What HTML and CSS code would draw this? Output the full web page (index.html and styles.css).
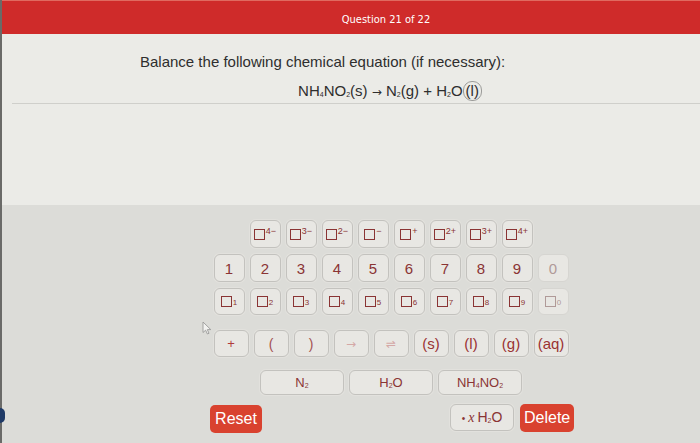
FILE: index.html
```html
<!DOCTYPE html>
<html>
<head>
<meta charset="utf-8">
<link rel="stylesheet" href="styles.css">
</head>
<body>
<div class="screen">
  <header class="topbar"><span class="title">Question 21 of 22</span></header>
  <section class="prompt">
    <p class="instr">Balance the following chemical equation (if necessary):</p>
    <div class="eqrow">
      <div class="eq">NH<sub>4</sub>NO<sub>2</sub>(s) <span class="arr">→</span> N<sub>2</sub>(g) + H<sub>2</sub>O<span class="focus">(l)</span></div>
    </div>
    <div class="rule"></div>
  </section>
  <section class="pad">
    <div class="keys">
      <div class="row r-charge">
        <button class="key"><span class="box"></span><sup>4−</sup></button>
        <button class="key"><span class="box"></span><sup>3−</sup></button>
        <button class="key"><span class="box"></span><sup>2−</sup></button>
        <button class="key"><span class="box"></span><sup>−</sup></button>
        <button class="key"><span class="box"></span><sup>+</sup></button>
        <button class="key"><span class="box"></span><sup>2+</sup></button>
        <button class="key"><span class="box"></span><sup>3+</sup></button>
        <button class="key"><span class="box"></span><sup>4+</sup></button>
      </div>
      <div class="row r-digit">
        <button class="key">1</button>
        <button class="key">2</button>
        <button class="key">3</button>
        <button class="key">4</button>
        <button class="key">5</button>
        <button class="key">6</button>
        <button class="key">7</button>
        <button class="key">8</button>
        <button class="key">9</button>
        <button class="key dim">0</button>
      </div>
      <div class="row r-sub">
        <button class="key"><span class="box"></span><sub>1</sub></button>
        <button class="key"><span class="box"></span><sub>2</sub></button>
        <button class="key"><span class="box"></span><sub>3</sub></button>
        <button class="key"><span class="box"></span><sub>4</sub></button>
        <button class="key"><span class="box"></span><sub>5</sub></button>
        <button class="key"><span class="box"></span><sub>6</sub></button>
        <button class="key"><span class="box"></span><sub>7</sub></button>
        <button class="key"><span class="box"></span><sub>8</sub></button>
        <button class="key"><span class="box"></span><sub>9</sub></button>
        <button class="key dim"><span class="box"></span><sub>0</sub></button>
      </div>
      <div class="row r-sym">
        <button class="key plus">+</button>
        <button class="key paren">(</button>
        <button class="key paren">)</button>
        <button class="key faint">→</button>
        <button class="key faint">⇌</button>
        <button class="key state">(s)</button>
        <button class="key state">(l)</button>
        <button class="key state">(g)</button>
        <button class="key state">(aq)</button>
      </div>
      <div class="row r-species">
        <button class="key species"><span class="formula">N<sub>2</sub></span></button>
        <button class="key species"><span class="formula">H<sub>2</sub>O</span></button>
        <button class="key species"><span class="formula">NH<sub>4</sub>NO<sub>2</sub></span></button>
      </div>
      <div class="row r-actions">
        <button class="btn-red">Reset</button>
        <div class="right-group">
          <button class="key hydrate"><span class="formula"><span class="dot">•</span><i>x</i>H<sub>2</sub>O</span></button>
          <button class="btn-red">Delete</button>
        </div>
      </div>
    </div>
  </section>
  <svg class="cursor" width="10" height="14" viewBox="0 0 10 14"><path d="M1 1 L1 11.5 L3.6 9.2 L5.4 13 L7 12.3 L5.3 8.6 L8.8 8.6 Z" fill="#f2f2f0" stroke="#9a9a98" stroke-width="0.9" stroke-linejoin="round"/></svg>
  <span class="blob"></span>
</div>
</body>
</html>
```

FILE: styles.css
```css
* { box-sizing: border-box; }
html, body { margin: 0; padding: 0; }
body {
  width: 700px;
  height: 443px;
  overflow: hidden;
  font-family: "Liberation Sans", Arial, sans-serif;
  background: #dcdcd8;
}
.screen {
  position: relative;
  width: 700px;
  height: 443px;
  border-left: 2px solid #6a6a68;
  display: flex;
  flex-direction: column;
}
.topbar {
  height: 34px;
  flex: none;
  background: #cf2b2a;
  border-top: 1px solid #e06a60;
  display: flex;
  justify-content: center;
  padding-left: 70px;
  padding-top: 12px;
}
.title {
  color: #fff;
  font-family: "Liberation Sans Narrow", "DejaVu Sans Condensed", "Liberation Sans", sans-serif;
  font-size: 11px;
  line-height: 14px;
}
.prompt {
  height: 171px;
  flex: none;
  background: #ebebe7;
  padding-top: 19px;
}
.instr {
  margin: 0 0 0 138px;
  font-size: 15px;
  line-height: 18px;
  color: #2e2e2e;
}
.eqrow {
  display: flex;
  justify-content: center;
  margin-left: 78px;
  margin-top: 10px;
}
.eq {
  font-size: 15px;
  line-height: 20px;
  color: #2e2e2e;
  white-space: nowrap;
}
.eq sub, .formula sub {
  font-size: 7px;
  vertical-align: -1px;
  line-height: 0;
}
.arr { font-family: "DejaVu Sans", sans-serif; font-size: 12px; }
.focus {
  display: inline-block;
  border: 1px solid #9c9c9a;
  border-radius: 9px;
  padding: 0 2px;
  line-height: 18px;
}
.rule {
  height: 1px;
  background: #cfcfcb;
  margin: 1px 0 0 10px;
}
.pad {
  flex: 1;
  background: #dcdcd8;
  padding-top: 15px;
}
.keys {
  width: 356px;
  margin-left: 211px;
  display: flex;
  flex-direction: column;
}
.row {
  display: flex;
  justify-content: center;
  gap: 5px;
}
.key {
  width: 31px;
  height: 28px;
  padding: 0;
  margin: 0;
  border: 1px solid #c3c2be;
  border-radius: 6px;
  background: #e8e7e3;
  box-shadow: 0 0 0 1px #e2e1dd;
  color: #8a3434;
  font-family: "Liberation Sans", Arial, sans-serif;
  font-size: 15px;
  display: flex;
  align-items: center;
  justify-content: center;
}
.box {
  display: inline-block;
  width: 11px;
  height: 11px;
  border: 1px solid #8a3434;
}
.key > sup {
  font-size: 9px;
  line-height: 1;
  align-self: flex-start;
  margin-top: 6px;
  margin-left: 1px;
}
.key > sub {
  font-size: 8px;
  line-height: 1;
  align-self: flex-end;
  margin-bottom: 7px;
  margin-left: 1px;
}
.r-digit { margin-top: 6px; }
.r-sub { margin-top: 6px; }
.r-sub .key { height: 27px; }
.key.dim { color: #b09a98; border-color: #d6d5d1; box-shadow: none; }
.key.dim .box { border-color: #b09a98; }
.r-sym { margin-top: 15px; }
.r-sym .key { width: 35px; height: 27px; }
.key.plus { color: #b03a3a; font-size: 13px; }
.key.paren { color: #a45252; font-size: 14px; }
.key.faint { color: #d4a8a6; font-size: 12px; font-family: "DejaVu Sans", sans-serif; }
.key.state { color: #9a3232; font-size: 15px; }
.r-species { margin-top: 13px; }
.key.species { width: 84px; height: 25px; font-size: 13px; color: #8a3434; }
.r-actions {
  margin: 7px -5px 0 -3px;
  justify-content: space-between;
  align-items: center;
}
.right-group { display: flex; gap: 6px; align-items: center; }
.btn-red {
  height: 28px;
  padding: 0 4px;
  border: none;
  border-radius: 5px;
  background: #d9422f;
  color: #fff;
  font-family: "Liberation Sans", Arial, sans-serif;
  font-size: 16px;
}
.r-actions > .btn-red { width: 52px; margin-top: 3px; }
.right-group .btn-red { width: 54px; }
.key.hydrate { width: 64px; height: 27px; font-size: 14px; color: #8a3434; }
.key.hydrate .dot { font-size: 10px; margin-right: 3px; }
.key.hydrate i { font-family: "Liberation Serif", serif; margin-right: 3px; }
.cursor { position: absolute; left: 200px; top: 321px; }
.blob {
  position: absolute;
  left: -2px;
  top: 408px;
  width: 5px;
  height: 15px;
  border-radius: 0 8px 8px 0;
  background: #1f3a66;
}
```
